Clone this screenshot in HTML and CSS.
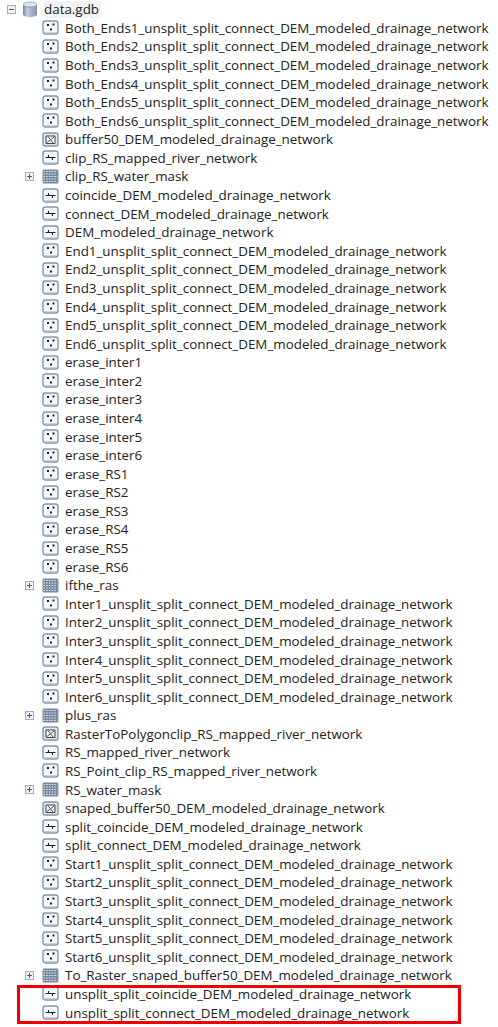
FILE: index.html
```html
<!DOCTYPE html>
<html>
<head>
    <title>data.gdb</title>
    <link rel="stylesheet" href="styles.css">
</head>
<body>

    <!-- Icon shapes used by the tree rows -->
    <svg class="defs" width="0" height="0">
      <defs>
        <linearGradient id="drum" x1="0" x2="1" y1="0" y2="0">
          <stop offset="0" stop-color="#6f85a0"/>
          <stop offset="0.3" stop-color="#c3d0de"/>
          <stop offset="1" stop-color="#7e93ac"/>
        </linearGradient>
      </defs>
      <symbol id="frame" viewBox="0 0 17 17">
        <rect x="1" y="2" width="15" height="13" rx="2.500" fill="#f5f8fb" stroke="#8496ad" stroke-width="1.400"/>
        <path d="M2.500 13.700h12" stroke="#bcc9d8"/>
      </symbol>
      <symbol id="point" viewBox="0 0 17 17">
        <use href="#frame"/>
        <rect x="5" y="5" width="2" height="2" fill="#222"/>
        <rect x="10.500" y="4.500" width="2" height="2" fill="#222"/>
        <rect x="8" y="9.500" width="2" height="2" fill="#222"/>
      </symbol>
      <symbol id="line" viewBox="0 0 17 17">
        <use href="#frame"/>
        <path d="M3.500 8.500h10M6.500 6v2.500M10.500 8.500v2.500" stroke="#222" stroke-width="1.100" fill="none"/>
      </symbol>
      <symbol id="poly" viewBox="0 0 17 17">
        <rect x="1" y="2" width="15" height="13" rx="2" fill="#dfe6ee" stroke="#8496ad" stroke-width="1.400"/>
        <path d="M4 5h9v7.500h-9z" fill="#f4f6f8" stroke="#444"/>
        <path d="M5 11.500l7-5.500M6 5.500l5 6.500" stroke="#555" fill="none"/>
      </symbol>
      <symbol id="raster" viewBox="0 0 17 17">
        <rect x="0.500" y="1.500" width="16" height="14" rx="1.500" fill="#74889f"/>
        <path d="M1.500 3.500h14M1.500 6h14M1.500 8.500h14M1.500 11h14M1.500 13.500h14" stroke="#e8edf3" stroke-dasharray="1.500 1.200"/>
      </symbol>
      <symbol id="gdb" viewBox="0 0 16 17">
        <path d="M1 3.500v10c0 1.500 3 2.500 7 2.500s7-1 7-2.500v-10z" fill="url(#drum)"/>
        <ellipse cx="8" cy="3.500" rx="7" ry="2.500" fill="#dbe4ee" stroke="#7f93ad" stroke-width="0.700"/>
      </symbol>
    </svg>

    <div class="tree">
      <div class="row root">
        <span class="toggle"><span class="box minus"></span></span>
        <svg class="icon gdb"><use href="#gdb"/></svg>
        <span class="name selected">data.gdb</span>
      </div>

      <div class="row"><span class="toggle"></span><svg class="icon"><use href="#point"/></svg><span class="name">Both_Ends1_unsplit_split_connect_DEM_modeled_drainage_network</span></div>
      <div class="row"><span class="toggle"></span><svg class="icon"><use href="#point"/></svg><span class="name">Both_Ends2_unsplit_split_connect_DEM_modeled_drainage_network</span></div>
      <div class="row"><span class="toggle"></span><svg class="icon"><use href="#point"/></svg><span class="name">Both_Ends3_unsplit_split_connect_DEM_modeled_drainage_network</span></div>
      <div class="row"><span class="toggle"></span><svg class="icon"><use href="#point"/></svg><span class="name">Both_Ends4_unsplit_split_connect_DEM_modeled_drainage_network</span></div>
      <div class="row"><span class="toggle"></span><svg class="icon"><use href="#point"/></svg><span class="name">Both_Ends5_unsplit_split_connect_DEM_modeled_drainage_network</span></div>
      <div class="row"><span class="toggle"></span><svg class="icon"><use href="#point"/></svg><span class="name">Both_Ends6_unsplit_split_connect_DEM_modeled_drainage_network</span></div>
      <div class="row"><span class="toggle"></span><svg class="icon"><use href="#poly"/></svg><span class="name">buffer50_DEM_modeled_drainage_network</span></div>
      <div class="row"><span class="toggle"></span><svg class="icon"><use href="#line"/></svg><span class="name">clip_RS_mapped_river_network</span></div>
      <div class="row"><span class="toggle"><span class="box plus"></span></span><svg class="icon"><use href="#raster"/></svg><span class="name">clip_RS_water_mask</span></div>
      <div class="row"><span class="toggle"></span><svg class="icon"><use href="#line"/></svg><span class="name">coincide_DEM_modeled_drainage_network</span></div>
      <div class="row"><span class="toggle"></span><svg class="icon"><use href="#line"/></svg><span class="name">connect_DEM_modeled_drainage_network</span></div>
      <div class="row"><span class="toggle"></span><svg class="icon"><use href="#line"/></svg><span class="name">DEM_modeled_drainage_network</span></div>
      <div class="row"><span class="toggle"></span><svg class="icon"><use href="#point"/></svg><span class="name">End1_unsplit_split_connect_DEM_modeled_drainage_network</span></div>
      <div class="row"><span class="toggle"></span><svg class="icon"><use href="#point"/></svg><span class="name">End2_unsplit_split_connect_DEM_modeled_drainage_network</span></div>
      <div class="row"><span class="toggle"></span><svg class="icon"><use href="#point"/></svg><span class="name">End3_unsplit_split_connect_DEM_modeled_drainage_network</span></div>
      <div class="row"><span class="toggle"></span><svg class="icon"><use href="#point"/></svg><span class="name">End4_unsplit_split_connect_DEM_modeled_drainage_network</span></div>
      <div class="row"><span class="toggle"></span><svg class="icon"><use href="#point"/></svg><span class="name">End5_unsplit_split_connect_DEM_modeled_drainage_network</span></div>
      <div class="row"><span class="toggle"></span><svg class="icon"><use href="#point"/></svg><span class="name">End6_unsplit_split_connect_DEM_modeled_drainage_network</span></div>
      <div class="row"><span class="toggle"></span><svg class="icon"><use href="#point"/></svg><span class="name">erase_inter1</span></div>
      <div class="row"><span class="toggle"></span><svg class="icon"><use href="#point"/></svg><span class="name">erase_inter2</span></div>
      <div class="row"><span class="toggle"></span><svg class="icon"><use href="#point"/></svg><span class="name">erase_inter3</span></div>
      <div class="row"><span class="toggle"></span><svg class="icon"><use href="#point"/></svg><span class="name">erase_inter4</span></div>
      <div class="row"><span class="toggle"></span><svg class="icon"><use href="#point"/></svg><span class="name">erase_inter5</span></div>
      <div class="row"><span class="toggle"></span><svg class="icon"><use href="#point"/></svg><span class="name">erase_inter6</span></div>
      <div class="row"><span class="toggle"></span><svg class="icon"><use href="#point"/></svg><span class="name">erase_RS1</span></div>
      <div class="row"><span class="toggle"></span><svg class="icon"><use href="#point"/></svg><span class="name">erase_RS2</span></div>
      <div class="row"><span class="toggle"></span><svg class="icon"><use href="#point"/></svg><span class="name">erase_RS3</span></div>
      <div class="row"><span class="toggle"></span><svg class="icon"><use href="#point"/></svg><span class="name">erase_RS4</span></div>
      <div class="row"><span class="toggle"></span><svg class="icon"><use href="#point"/></svg><span class="name">erase_RS5</span></div>
      <div class="row"><span class="toggle"></span><svg class="icon"><use href="#point"/></svg><span class="name">erase_RS6</span></div>
      <div class="row"><span class="toggle"><span class="box plus"></span></span><svg class="icon"><use href="#raster"/></svg><span class="name">ifthe_ras</span></div>
      <div class="row"><span class="toggle"></span><svg class="icon"><use href="#point"/></svg><span class="name">Inter1_unsplit_split_connect_DEM_modeled_drainage_network</span></div>
      <div class="row"><span class="toggle"></span><svg class="icon"><use href="#point"/></svg><span class="name">Inter2_unsplit_split_connect_DEM_modeled_drainage_network</span></div>
      <div class="row"><span class="toggle"></span><svg class="icon"><use href="#point"/></svg><span class="name">Inter3_unsplit_split_connect_DEM_modeled_drainage_network</span></div>
      <div class="row"><span class="toggle"></span><svg class="icon"><use href="#point"/></svg><span class="name">Inter4_unsplit_split_connect_DEM_modeled_drainage_network</span></div>
      <div class="row"><span class="toggle"></span><svg class="icon"><use href="#point"/></svg><span class="name">Inter5_unsplit_split_connect_DEM_modeled_drainage_network</span></div>
      <div class="row"><span class="toggle"></span><svg class="icon"><use href="#point"/></svg><span class="name">Inter6_unsplit_split_connect_DEM_modeled_drainage_network</span></div>
      <div class="row"><span class="toggle"><span class="box plus"></span></span><svg class="icon"><use href="#raster"/></svg><span class="name">plus_ras</span></div>
      <div class="row"><span class="toggle"></span><svg class="icon"><use href="#poly"/></svg><span class="name">RasterToPolygonclip_RS_mapped_river_network</span></div>
      <div class="row"><span class="toggle"></span><svg class="icon"><use href="#line"/></svg><span class="name">RS_mapped_river_network</span></div>
      <div class="row"><span class="toggle"></span><svg class="icon"><use href="#point"/></svg><span class="name">RS_Point_clip_RS_mapped_river_network</span></div>
      <div class="row"><span class="toggle"><span class="box plus"></span></span><svg class="icon"><use href="#raster"/></svg><span class="name">RS_water_mask</span></div>
      <div class="row"><span class="toggle"></span><svg class="icon"><use href="#poly"/></svg><span class="name">snaped_buffer50_DEM_modeled_drainage_network</span></div>
      <div class="row"><span class="toggle"></span><svg class="icon"><use href="#line"/></svg><span class="name">split_coincide_DEM_modeled_drainage_network</span></div>
      <div class="row"><span class="toggle"></span><svg class="icon"><use href="#line"/></svg><span class="name">split_connect_DEM_modeled_drainage_network</span></div>
      <div class="row"><span class="toggle"></span><svg class="icon"><use href="#point"/></svg><span class="name">Start1_unsplit_split_connect_DEM_modeled_drainage_network</span></div>
      <div class="row"><span class="toggle"></span><svg class="icon"><use href="#point"/></svg><span class="name">Start2_unsplit_split_connect_DEM_modeled_drainage_network</span></div>
      <div class="row"><span class="toggle"></span><svg class="icon"><use href="#point"/></svg><span class="name">Start3_unsplit_split_connect_DEM_modeled_drainage_network</span></div>
      <div class="row"><span class="toggle"></span><svg class="icon"><use href="#point"/></svg><span class="name">Start4_unsplit_split_connect_DEM_modeled_drainage_network</span></div>
      <div class="row"><span class="toggle"></span><svg class="icon"><use href="#point"/></svg><span class="name">Start5_unsplit_split_connect_DEM_modeled_drainage_network</span></div>
      <div class="row"><span class="toggle"></span><svg class="icon"><use href="#point"/></svg><span class="name">Start6_unsplit_split_connect_DEM_modeled_drainage_network</span></div>
      <div class="row"><span class="toggle"><span class="box plus"></span></span><svg class="icon"><use href="#raster"/></svg><span class="name">To_Raster_snaped_buffer50_DEM_modeled_drainage_network</span></div>
      <div class="row"><span class="toggle"></span><svg class="icon"><use href="#line"/></svg><span class="name">unsplit_split_coincide_DEM_modeled_drainage_network</span></div>
      <div class="row"><span class="toggle"></span><svg class="icon"><use href="#line"/></svg><span class="name">unsplit_split_connect_DEM_modeled_drainage_network</span></div>
    </div>

    <!-- Red annotation drawn over the last two rows -->
    <div class="callout"></div>

</body>
</html>
```

FILE: styles.css
```css
html, body {
    margin: 0;
    height: 1027px;
    overflow: hidden;
}

body {
    position: relative;
    background-color: #fff;
    color: #222;
    font-family: "Open Sans", sans-serif;
    font-size: 13.4px;
}

.defs {
    position: absolute;
}

.row {
    display: flex;
    align-items: center;
    height: 18.59px;
    padding-left: 25px;
    white-space: nowrap;
}

.root {
    padding-left: 7px;
}

.toggle {
    display: flex;
    align-items: center;
    width: 17px;
    flex: none;
}

.root .toggle {
    width: 15px;
}

.box {
    position: relative;
    width: 9px;
    height: 9px;
    box-sizing: border-box;
    border: 1px solid #a4aebb;
    background-color: #f3f5f8;
}

.box:before {
    content: "";
    position: absolute;
    left: 1px;
    top: 3px;
    width: 5px;
    height: 1px;
    background-color: #3d5f8f;
}

.plus:after {
    content: "";
    position: absolute;
    left: 3px;
    top: 1px;
    width: 1px;
    height: 5px;
    background-color: #3d5f8f;
}

.icon {
    flex: none;
    width: 17px;
    height: 17px;
    margin-right: 6px;
}

.gdb {
    width: 16px;
}

.name.selected {
    background-color: #f3f3f3;
    padding-right: 2px;
    line-height: 17px;
}

.callout {
    position: absolute;
    left: 17px;
    top: 985px;
    width: 444px;
    height: 39px;
    box-sizing: border-box;
    border: 3px solid #f00000;
}
```
